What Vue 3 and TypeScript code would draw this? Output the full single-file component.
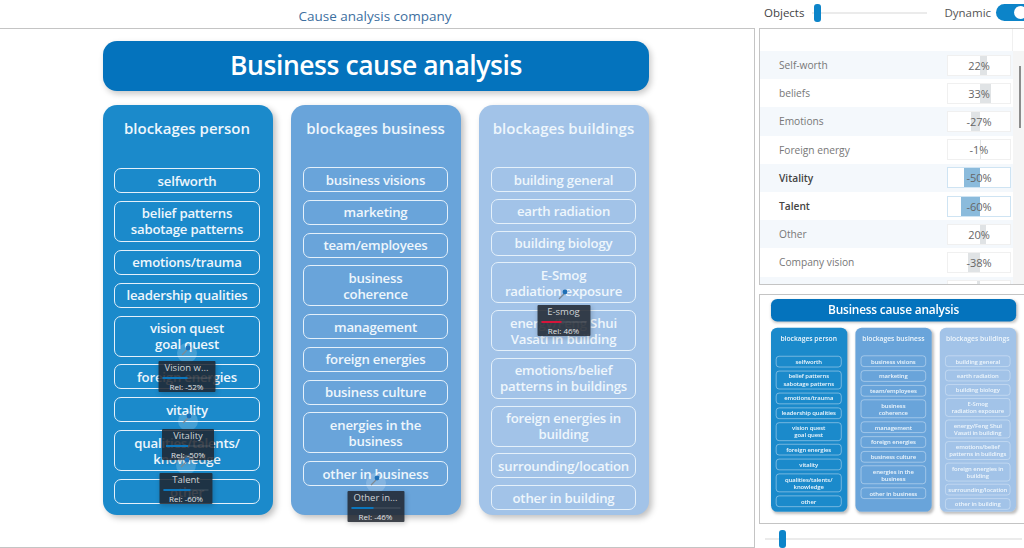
<script setup lang="ts">
const columns = [
  {
    key: 'person',
    title: 'blockages person',
    items: [
      'selfworth',
      'belief patterns\nsabotage patterns',
      'emotions/trauma',
      'leadership qualities',
      'vision quest\ngoal quest',
      'foreign energies',
      'vitality',
      'qualities/talents/\nknowledge',
      'other',
    ],
  },
  {
    key: 'business',
    title: 'blockages business',
    items: [
      'business visions',
      'marketing',
      'team/employees',
      'business\ncoherence',
      'management',
      'foreign energies',
      'business culture',
      'energies in the\nbusiness',
      'other in business',
    ],
  },
  {
    key: 'buildings',
    title: 'blockages buildings',
    items: [
      'building general',
      'earth radiation',
      'building biology',
      'E-Smog\nradiation exposure',
      'energy/Feng Shui\nVasati in building',
      'emotions/belief\npatterns in buildings',
      'foreign energies in\nbuilding',
      'surrounding/location',
      'other in building',
    ],
  },
]

// pin positions are relative to the poster
const pins = [
  { name: 'Vision w...', rel: -52, x: 83.5, y: 312, w: 57 },
  { name: 'Vitality', rel: -50, x: 85, y: 380, w: 52 },
  { name: 'Talent', rel: -60, x: 83, y: 424, w: 53 },
  { name: 'Other in...', rel: -46, x: 272.5, y: 442, w: 57 },
  { name: 'E-smog', rel: 46, x: 460.5, y: 256, w: 53 },
]

const rows = [
  { name: 'Self-worth', value: 22 },
  { name: 'beliefs', value: 33 },
  { name: 'Emotions', value: -27 },
  { name: 'Foreign energy', value: -1 },
  { name: 'Vitality', value: -50, active: true },
  { name: 'Talent', value: -60, active: true },
  { name: 'Other', value: 20 },
  { name: 'Company vision', value: -38 },
  { name: '', value: -8 },
]

function barStyle(value: number) {
  const w = Math.abs(value) * 0.32
  return { width: w + 'px', left: value < 0 ? 32 - w + 'px' : '32px' }
}
</script>

<template>
  <div class="app">
    <section class="left">
      <h1 class="page-title">Cause analysis company</h1>
      <div class="canvas">
        <div class="poster">
          <div class="poster-head">Business cause analysis</div>
          <div class="poster-cols">
            <div v-for="col in columns" :key="col.key" class="col" :class="'col-' + col.key">
              <h2 class="col-title">{{ col.title }}</h2>
              <div class="col-list">
                <div v-for="item in col.items" :key="item" class="col-item">{{ item }}</div>
              </div>
            </div>
          </div>

          <div
            v-for="pin in pins"
            :key="pin.name"
            class="pin"
            :style="{ left: pin.x + 'px', top: pin.y + 'px' }"
          >
            <span class="pin-halo" :class="{ 'pin-halo-none': pin.rel > 0 }"></span>
            <svg class="pin-mark" width="12" height="12" viewBox="0 0 12 12">
              <path d="M1 11 L6 6" stroke="#7d8a94" stroke-width="1.2" fill="none" />
              <circle cx="7" cy="4" r="2.4" fill="#1f6fb5" />
            </svg>
            <div class="tip" :style="{ width: pin.w + 'px' }">
              <div class="tip-name">{{ pin.name }}</div>
              <div class="tip-track">
                <span
                  class="tip-fill"
                  :class="{ 'tip-fill-red': pin.rel > 0 }"
                  :style="{ width: Math.abs(pin.rel) + '%' }"
                ></span>
              </div>
              <div class="tip-rel">Rel: {{ pin.rel }}%</div>
            </div>
          </div>
        </div>
      </div>
    </section>

    <section class="right">
      <div class="controls">
        <span class="ctl-label">Objects</span>
        <div class="slider slider-top"><span class="thumb"></span></div>
        <span class="ctl-label ctl-dynamic">Dynamic</span>
        <span class="toggle"><span class="knob"></span></span>
      </div>

      <div class="table-panel">
        <div class="table-head"></div>
        <div class="table-body">
          <div class="rows">
            <div
              v-for="(row, i) in rows"
              :key="i"
              class="row"
              :class="{ 'row-shade': i % 2 === 0, 'row-active': row.active }"
            >
              <span class="row-name">{{ row.name }}</span>
              <div class="row-box">
                <span class="row-bar" :style="barStyle(row.value)"></span>
                <span v-if="row.name" class="row-val">{{ row.value }}%</span>
              </div>
            </div>
          </div>
          <div class="scroll"><span class="scroll-thumb"></span></div>
        </div>
      </div>

      <div class="preview">
        <div class="poster poster-mini">
          <div class="poster-head">Business cause analysis</div>
          <div class="poster-cols">
            <div v-for="col in columns" :key="col.key" class="col" :class="'col-' + col.key">
              <h2 class="col-title">{{ col.title }}</h2>
              <div class="col-list">
                <div v-for="item in col.items" :key="item" class="col-item">{{ item }}</div>
              </div>
            </div>
          </div>
        </div>
      </div>

      <div class="slider slider-bottom"><span class="thumb"></span></div>
    </section>
  </div>
</template>

<style scoped>
.app {
  display: flex;
  width: 1024px;
  height: 548px;
  overflow: hidden;
  background: #fff;
  font-family: 'Open Sans', 'Noto Sans', sans-serif;
}
.left {
  display: flex;
  flex-direction: column;
  width: 755px;
  flex: none;
}
.page-title {
  height: 28px;
  margin: 0;
  padding-right: 5px;
  font-size: 13.5px;
  font-weight: 400;
  line-height: 32px;
  text-align: center;
  color: #3d6f9f;
}
.canvas {
  flex: 1;
  padding: 12px 0 0 103px;
  border-top: 1px solid #c4c4c4;
  border-right: 1px solid #c4c4c4;
  border-bottom: 1px solid #c4c4c4;
  overflow: hidden;
}
.poster {
  position: relative;
  width: 546px;
}
.poster-head {
  height: 50px;
  border-radius: 14px;
  background: #0473bd;
  box-shadow: 2px 3px 6px rgba(0, 0, 0, 0.22);
  color: #fff;
  font-size: 26.5px;
  font-weight: 600;
  letter-spacing: -0.45px;
  line-height: 48px;
  text-align: center;
}
.poster-cols {
  display: flex;
  gap: 18px;
  margin-top: 14px;
}
.col {
  width: 170px;
  height: 410px;
  padding: 0 13px 0 12px;
  box-sizing: border-box;
  border-radius: 14px;
  box-shadow: 3px 3px 6px rgba(0, 0, 0, 0.25);
  color: #eef6fc;
}
.col-person {
  padding-left: 11px;
  background: #1b8acb;
}
.col-business {
  background: #69a4da;
}
.col-buildings {
  background: #a2c3e8;
}
.col-title {
  height: 62px;
  margin: 0;
  font-size: 15px;
  font-weight: 600;
  line-height: 46px;
  text-align: center;
  white-space: nowrap;
}
.col-list {
  display: flex;
  flex-direction: column;
  justify-content: space-between;
}
.col-person .col-list {
  height: 336px;
  margin-top: 1px;
}
.col-business .col-list {
  height: 319px;
}
.col-buildings .col-list {
  height: 343px;
}
.col-item {
  padding: 3.5px 0;
  border: 1.5px solid #e4f0fa;
  border-radius: 7px;
  font-size: 13.2px;
  font-weight: 600;
  letter-spacing: -0.2px;
  line-height: 16px;
  text-align: center;
  white-space: pre-line;
}
.pin {
  position: absolute;
  width: 0;
  height: 0;
}
.pin-halo {
  position: absolute;
  left: -10px;
  top: -10px;
  width: 20px;
  height: 20px;
  border-radius: 50%;
  background: rgba(255, 255, 255, 0.18);
}
.pin-halo-none {
  background: transparent;
}
.pin-mark {
  position: absolute;
  left: -6px;
  top: -9px;
}
.tip {
  position: absolute;
  top: 8px;
  left: 0;
  transform: translateX(-50%);
  height: 31px;
  padding: 0 4px;
  box-sizing: border-box;
  background: rgba(32, 37, 46, 0.86);
  border-radius: 1px;
  box-shadow: 1px 2px 5px rgba(0, 0, 0, 0.18);
  color: #cfd3d6;
  text-align: center;
}
.tip-name {
  font-size: 9.5px;
  line-height: 13px;
  white-space: nowrap;
}
.tip-track {
  position: relative;
  height: 2px;
  margin-top: 3px;
  background: rgba(255, 255, 255, 0.08);
}
.tip-fill {
  position: absolute;
  left: 0;
  top: 0;
  height: 2px;
  background: #0b76bd;
}
.tip-fill-red {
  background: #d5153a;
}
.tip-rel {
  margin-top: 2px;
  font-size: 8px;
  line-height: 11px;
  color: #e2e4e6;
  white-space: nowrap;
}

.right {
  display: flex;
  flex-direction: column;
  flex: 1;
  min-width: 0;
}
.controls {
  display: flex;
  align-items: center;
  height: 28px;
  padding: 0 0 3px 9px;
  box-sizing: border-box;
  font-size: 11.5px;
  color: #444;
}
.ctl-label {
  flex: none;
  white-space: nowrap;
}
.ctl-dynamic {
  margin-left: 17px;
  color: #555;
}
.slider {
  position: relative;
  flex: none;
  height: 2px;
  background: #ebebeb;
}
.slider-top {
  width: 115px;
  margin-left: 8px;
}
.slider-bottom {
  margin: 14px 2px 0 10px;
}
.thumb {
  position: absolute;
  top: -8px;
  left: 2px;
  width: 7px;
  height: 18px;
  border-radius: 3px;
  background: #0c84c9;
}
.slider-bottom .thumb {
  left: 14px;
}
.toggle {
  position: relative;
  flex: none;
  width: 40px;
  height: 17px;
  margin-left: 5px;
  border-radius: 9px;
  background: #0c84c9;
}
.knob {
  position: absolute;
  left: 18px;
  top: 2px;
  width: 13px;
  height: 13px;
  border-radius: 50%;
  background: #fff;
}
.table-panel {
  height: 257px;
  margin-left: 4px;
  box-sizing: border-box;
  border-top: 1px solid #c4c4c4;
  border-left: 1px solid #c4c4c4;
  border-bottom: 1px solid #c4c4c4;
  overflow: hidden;
}
.table-head {
  height: 22px;
  margin-right: 11px;
  border-right: 1px solid #f0f0f0;
}
.table-body {
  display: flex;
}
.rows {
  flex: 1;
  min-width: 0;
}
.row {
  display: flex;
  align-items: center;
  justify-content: space-between;
  height: 28.2px;
  padding: 0 2px 0 19px;
  font-size: 10.2px;
  color: #777;
}
.row-shade {
  background: #f4f8fc;
}
.row-active {
  font-weight: 600;
  color: #444;
}
.row-box {
  position: relative;
  width: 64px;
  height: 21px;
  box-sizing: border-box;
  border: 1px solid #f0f0f0;
  background: #fff;
  text-align: center;
  font-weight: 400;
  font-size: 11px;
  line-height: 20px;
  color: #666;
}
.row-active .row-box {
  border-color: #cfe4f3;
}
.row-bar {
  position: absolute;
  top: 0;
  bottom: 0;
  background: #e0e3e5;
}
.row-active .row-bar {
  background: #8bbbdc;
}
.row-val {
  position: relative;
}
.scroll {
  position: relative;
  flex: none;
  width: 11px;
  background: #f5f5f5;
}
.scroll-thumb {
  position: absolute;
  left: 6px;
  top: 15px;
  width: 2px;
  height: 62px;
  background: #8c8c8c;
}
.preview {
  height: 230px;
  margin: 9px 0 0 4px;
  box-sizing: border-box;
  padding: 4px 0 0 11px;
  border-top: 1px solid #c4c4c4;
  border-left: 1px solid #c4c4c4;
  border-bottom: 1px solid #c4c4c4;
  overflow: hidden;
}
.poster-mini {
  transform: scale(0.449);
  transform-origin: 0 0;
  filter: blur(0.5px);
}
</style>

<style>
html,
body {
  margin: 0;
  overflow: hidden;
}
</style>
